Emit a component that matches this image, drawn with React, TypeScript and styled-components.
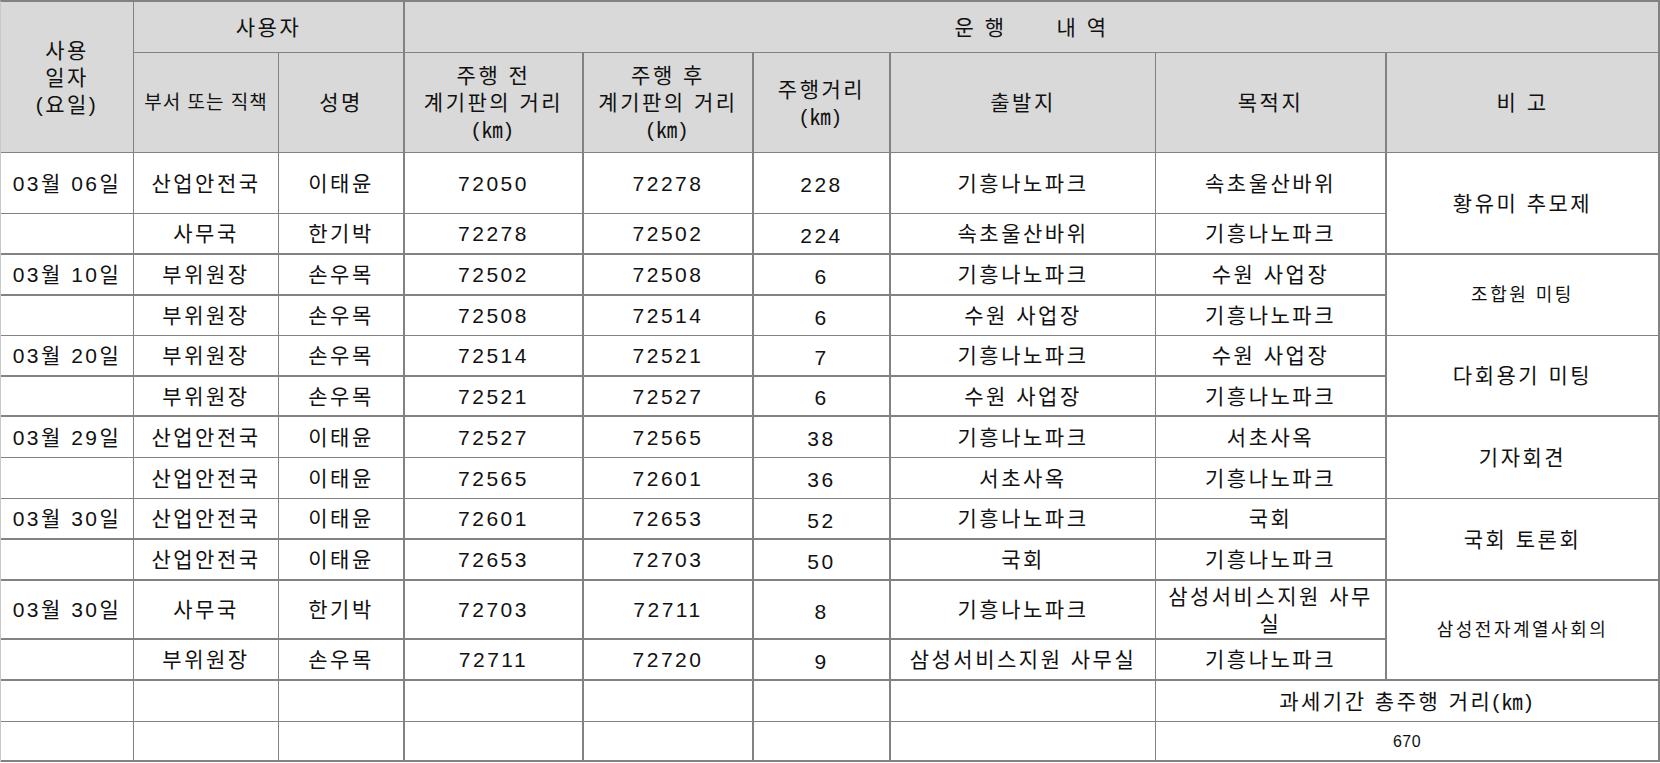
import React from "react";
import styled, { createGlobalStyle } from "styled-components";

const GlobalStyle = createGlobalStyle`
  html, body {
    margin: 0;
    padding: 0;
    background: #ffffff;
  }
  body {
    font-family: "Liberation Sans", "Noto Sans CJK KR", sans-serif;
    color: #111111;
  }
`;

const LINE = "#828282";

const COLS = [133, 145, 126, 179, 170, 137, 265, 231, 273];
const COL_RIGHT = [1, 1, 2, 2, 2, 2, 1, 2, 2];
const ROWS = [51, 100, 61, 41, 41, 40, 41, 40, 41, 41, 41, 41, 59, 41, 41, 40];
const ROW_BOTTOM = [1, 1, 1, 2, 2, 1, 2, 2, 1, 1, 2, 2, 2, 2, 1, 2];

const Sheet = styled.div`
  display: grid;
  grid-template-columns: ${COLS.map((c) => `${c}px`).join(" ")};
  grid-template-rows: ${ROWS.map((r) => `${r}px`).join(" ")};
  width: max-content;
  border-top: 2px solid ${LINE};
  border-left: 1px solid #c8c8c8;
`;

type CellProps = {
  $col: number;
  $row: number;
  $colSpan: number;
  $rowSpan: number;
  $size: number;
  $spacing: number;
};

const Cell = styled.div<CellProps>`
  grid-column: ${(p) => p.$col + 1} / span ${(p) => p.$colSpan};
  grid-row: ${(p) => p.$row + 1} / span ${(p) => p.$rowSpan};
  border-right: ${(p) => COL_RIGHT[p.$col + p.$colSpan - 1]}px solid ${LINE};
  border-bottom: ${(p) => ROW_BOTTOM[p.$row + p.$rowSpan - 1]}px solid ${LINE};
  display: flex;
  align-items: center;
  justify-content: center;
  text-align: center;
  font-size: ${(p) => p.$size}px;
  letter-spacing: ${(p) => p.$spacing}px;
  line-height: 27px;
  white-space: pre-wrap;
  overflow: hidden;
  min-width: 0;
  background: #ffffff;
`;

const HeadCell = styled(Cell)`
  background: #d9d9d9;
`;

const BodyCell = styled(Cell)`
  padding: 0 3px;
`;

const DistanceCell = styled(BodyCell)`
  padding-top: 3px;
`;

const NoteCell = styled(Cell)``;

const TotalCell = styled(Cell)``;

type Spec = {
  text: string;
  c: number;
  r: number;
  cs?: number;
  rs?: number;
  size?: number;
  ls?: number;
};

const header: Spec[] = [
  { text: "사용\n일자\n(요일)", c: 0, r: 0, rs: 2 },
  { text: "사용자", c: 1, r: 0, cs: 2 },
  { text: "운 행      내 역", c: 3, r: 0, cs: 6 },
  { text: "부서 또는 직책", c: 1, r: 1, size: 19, ls: 1 },
  { text: "성명", c: 2, r: 1 },
  { text: "주행 전\n계기판의 거리\n(㎞)", c: 3, r: 1 },
  { text: "주행 후\n계기판의 거리\n(㎞)", c: 4, r: 1 },
  { text: "주행거리\n(㎞)", c: 5, r: 1 },
  { text: "출발지", c: 6, r: 1 },
  { text: "목적지", c: 7, r: 1 },
  { text: "비 고", c: 8, r: 1 },
];

const trips: string[][] = [
  ["03월 06일", "산업안전국", "이태윤", "72050", "72278", "228", "기흥나노파크", "속초울산바위"],
  ["", "사무국", "한기박", "72278", "72502", "224", "속초울산바위", "기흥나노파크"],
  ["03월 10일", "부위원장", "손우목", "72502", "72508", "6", "기흥나노파크", "수원 사업장"],
  ["", "부위원장", "손우목", "72508", "72514", "6", "수원 사업장", "기흥나노파크"],
  ["03월 20일", "부위원장", "손우목", "72514", "72521", "7", "기흥나노파크", "수원 사업장"],
  ["", "부위원장", "손우목", "72521", "72527", "6", "수원 사업장", "기흥나노파크"],
  ["03월 29일", "산업안전국", "이태윤", "72527", "72565", "38", "기흥나노파크", "서초사옥"],
  ["", "산업안전국", "이태윤", "72565", "72601", "36", "서초사옥", "기흥나노파크"],
  ["03월 30일", "산업안전국", "이태윤", "72601", "72653", "52", "기흥나노파크", "국회"],
  ["", "산업안전국", "이태윤", "72653", "72703", "50", "국회", "기흥나노파크"],
  ["03월 30일", "사무국", "한기박", "72703", "72711", "8", "기흥나노파크", "삼성서비스지원 사무실"],
  ["", "부위원장", "손우목", "72711", "72720", "9", "삼성서비스지원 사무실", "기흥나노파크"],
];

const notes: { text: string; size: number; ls: number }[] = [
  { text: "황유미 추모제", size: 21, ls: 2.5 },
  { text: "조합원 미팅", size: 18, ls: 2.5 },
  { text: "다회용기 미팅", size: 21, ls: 2.5 },
  { text: "기자회견", size: 21, ls: 2.5 },
  { text: "국회 토론회", size: 21, ls: 2.5 },
  { text: "삼성전자계열사회의", size: 18, ls: 2.5 },
];

const BODY_SIZE = 21;
const BODY_SPACING = 2.5;
const DISTANCE_COL = 5;
const FIRST_BODY_ROW = 2;
const TOTAL_ROW = FIRST_BODY_ROW + trips.length;

export default function App() {
  return (
    <>
      <GlobalStyle />
      <Sheet>
        {header.map((h) => (
          <HeadCell
            key={`h-${h.r}-${h.c}`}
            $col={h.c}
            $row={h.r}
            $colSpan={h.cs ?? 1}
            $rowSpan={h.rs ?? 1}
            $size={h.size ?? BODY_SIZE}
            $spacing={h.ls ?? BODY_SPACING}
          >
            {h.text}
          </HeadCell>
        ))}
        {trips.map((row, ri) =>
          row.map((text, ci) => {
            const Comp = ci === DISTANCE_COL ? DistanceCell : BodyCell;
            return (
              <Comp
                key={`b-${ri}-${ci}`}
                $col={ci}
                $row={FIRST_BODY_ROW + ri}
                $colSpan={1}
                $rowSpan={1}
                $size={BODY_SIZE}
                $spacing={BODY_SPACING}
              >
                {text}
              </Comp>
            );
          })
        )}
        {notes.map((n, i) => (
          <NoteCell
            key={`n-${i}`}
            $col={8}
            $row={FIRST_BODY_ROW + i * 2}
            $colSpan={1}
            $rowSpan={2}
            $size={n.size}
            $spacing={n.ls}
          >
            {n.text}
          </NoteCell>
        ))}
        {[0, 1].map((ri) => (
          <React.Fragment key={`t-${ri}`}>
            {Array.from({ length: 7 }).map((_, ci) => (
              <BodyCell
                key={`te-${ri}-${ci}`}
                $col={ci}
                $row={TOTAL_ROW + ri}
                $colSpan={1}
                $rowSpan={1}
                $size={BODY_SIZE}
                $spacing={BODY_SPACING}
              />
            ))}
            <TotalCell
              $col={7}
              $row={TOTAL_ROW + ri}
              $colSpan={2}
              $rowSpan={1}
              $size={ri === 0 ? BODY_SIZE : 16}
              $spacing={ri === 0 ? BODY_SPACING : 0.5}
            >
              {ri === 0 ? "과세기간 총주행 거리(㎞)" : "670"}
            </TotalCell>
          </React.Fragment>
        ))}
      </Sheet>
    </>
  );
}
